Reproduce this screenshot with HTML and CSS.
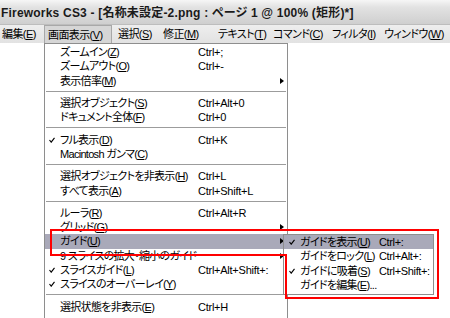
FILE: index.html
```html
<!DOCTYPE html>
<html lang="ja">
<head>
<meta charset="utf-8">
<title>Fireworks CS3</title>
<link rel="stylesheet" href="styles.css">
</head>
<body>
<div class="title">Fireworks CS3 - [名称未設定-2.png : ページ 1 @ 100% (矩形)*]</div>
<div class="menubar">
  <span class="mb mb-edit">編集(<u>E</u>)</span>
  <span class="mb mb-view active">画面表示(<u>V</u>)</span>
  <span class="mb mb-sel">選択(<u>S</u>)</span>
  <span class="mb mb-mod">修正(<u>M</u>)</span>
  <span class="mb mb-text">テキスト(<u>T</u>)</span>
  <span class="mb mb-cmd">コマンド(<u>C</u>)</span>
  <span class="mb mb-fil">フィルタ(<u>I</u>)</span>
  <span class="mb mb-win">ウィンドウ(<u>W</u>)</span>
</div>
<div class="stage">
  <div class="menu">
    <div class="item"><span class="chk"></span><span class="lbl">ズームイン(<u>Z</u>)</span><span class="key">Ctrl+;</span></div>
    <div class="item"><span class="chk"></span><span class="lbl">ズームアウト(<u>O</u>)</span><span class="key">Ctrl+-</span></div>
    <div class="item"><span class="chk"></span><span class="lbl">表示倍率(<u>M</u>)</span><span class="arrow"></span></div>
    <div class="sep"></div>
    <div class="item"><span class="chk"></span><span class="lbl">選択オブジェクト(<u>S</u>)</span><span class="key">Ctrl+Alt+0</span></div>
    <div class="item"><span class="chk"></span><span class="lbl">ドキュメント全体(<u>F</u>)</span><span class="key">Ctrl+0</span></div>
    <div class="sep"></div>
    <div class="item"><span class="chk"><svg viewBox="0 0 6 6" width="6" height="6"><polyline points="0.5,3 2.2,5.2 5.5,0.8" fill="none" stroke="#000" stroke-width="1.1"/></svg></span><span class="lbl">フル表示(<u>D</u>)</span><span class="key">Ctrl+K</span></div>
    <div class="item"><span class="chk"></span><span class="lbl">Macintosh ガンマ(<u>C</u>)</span></div>
    <div class="sep"></div>
    <div class="item"><span class="chk"></span><span class="lbl">選択オブジェクトを非表示(<u>H</u>)</span><span class="key">Ctrl+L</span></div>
    <div class="item"><span class="chk"></span><span class="lbl">すべて表示(<u>A</u>)</span><span class="key">Ctrl+Shift+L</span></div>
    <div class="sep"></div>
    <div class="item"><span class="chk"></span><span class="lbl">ルーラ(<u>R</u>)</span><span class="key">Ctrl+Alt+R</span></div>
    <div class="item"><span class="chk"></span><span class="lbl">グリッド(<u>G</u>)</span><span class="arrow"></span></div>
    <div class="item hl"><span class="chk"></span><span class="lbl">ガイド(<u>U</u>)</span><span class="arrow"></span></div>
    <div class="item"><span class="chk"></span><span class="lbl">9 スライスの拡大・縮小のガイド</span><span class="arrow"></span></div>
    <div class="item"><span class="chk"><svg viewBox="0 0 6 6" width="6" height="6"><polyline points="0.5,3 2.2,5.2 5.5,0.8" fill="none" stroke="#000" stroke-width="1.1"/></svg></span><span class="lbl">スライスガイド(<u>L</u>)</span><span class="key">Ctrl+Alt+Shift+:</span></div>
    <div class="item"><span class="chk"><svg viewBox="0 0 6 6" width="6" height="6"><polyline points="0.5,3 2.2,5.2 5.5,0.8" fill="none" stroke="#000" stroke-width="1.1"/></svg></span><span class="lbl">スライスのオーバーレイ(<u>Y</u>)</span></div>
    <div class="sep"></div>
    <div class="item"><span class="chk"></span><span class="lbl">選択状態を非表示(<u>E</u>)</span><span class="key">Ctrl+H</span></div>
  </div>
  <div class="submenu">
    <div class="item hl"><span class="chk"><svg viewBox="0 0 6 6" width="6" height="6"><polyline points="0.5,3 2.2,5.2 5.5,0.8" fill="none" stroke="#000" stroke-width="1.1"/></svg></span><span class="lbl">ガイドを表示(<u>U</u>)</span><span class="key">Ctrl+:</span></div>
    <div class="item"><span class="chk"></span><span class="lbl">ガイドをロック(<u>L</u>)</span><span class="key">Ctrl+Alt+:</span></div>
    <div class="item"><span class="chk"><svg viewBox="0 0 6 6" width="6" height="6"><polyline points="0.5,3 2.2,5.2 5.5,0.8" fill="none" stroke="#000" stroke-width="1.1"/></svg></span><span class="lbl">ガイドに吸着(<u>S</u>)</span><span class="key">Ctrl+Shift+:</span></div>
    <div class="item"><span class="chk"></span><span class="lbl">ガイドを編集(<u>E</u>)...</span></div>
  </div>
  <svg class="mark" width="450" height="275" viewBox="0 0 450 275">
    <polygon points="51,187 438,187 438,255 286,255 286,212 51,212" fill="none" stroke="#ff0000" stroke-width="2"/>
  </svg>
</div>
</body>
</html>
```

FILE: styles.css
```css
* { box-sizing: border-box; }
html, body { margin: 0; padding: 0; }
body {
  width: 450px;
  height: 318px;
  overflow: hidden;
  background: #ffffff;
  font-family: "Liberation Sans", "Noto Sans CJK JP", sans-serif;
  font-size: 11px;
  color: #000;
  font-feature-settings: "palt";
}
u { text-decoration: underline; text-underline-offset: 1px; }

.title {
  height: 25px;
  padding: 5px 0 0 1px;
  line-height: 16px;
  font-weight: bold;
  font-size: 12px;
  letter-spacing: 0.2px;
  white-space: nowrap;
  color: #1a1a1a;
  background: linear-gradient(#f6f6f6 0%, #e2e2e2 30%, #cfcfcf 100%);
  border-bottom: 1px solid #bdbdbd;
}

.menubar {
  height: 18px;
  display: flex;
  align-items: stretch;
  background: linear-gradient(#eeeeee, #e2e2e2);
  white-space: nowrap;
}
.mb {
  display: flex;
  align-items: center;
  padding: 0 4px 0 4px;
  line-height: 14px;
  letter-spacing: -0.6px;
}
.mb-edit { width: 44px; padding-left: 2px; }
.mb-view { width: 68px; }
.mb-sel { width: 46px; padding-left: 6px; }
.mb-mod { width: 53px; padding-left: 5px; }
.mb-text { width: 55px; padding-left: 7px; }
.mb-cmd { width: 60px; padding-left: 7px; }
.mb-fil { width: 52px; padding-left: 6px; }
.mb-win { width: 67px; padding-left: 6px; }
.mb.active {
  background: #d6d6d6;
  border: 1px solid #a8a8a8;
  border-bottom: none;
  padding-left: 3px;
}

.stage {
  position: relative;
  height: 275px;
}

.menu {
  margin-left: 44px;
  width: 244px;
  height: 290px;
  background: #ffffff;
  border: 1px solid #8e8e8e;
  padding-top: 1px;
}
.item {
  display: flex;
  align-items: center;
  height: 14.3px;
  padding-left: 3px;
  white-space: nowrap;
  line-height: 14px;
}
.item.hl { background: #a9a9b9; }
.chk {
  width: 12px;
  flex: none;
  display: flex;
  align-items: center;
  padding-left: 1px;
}
.chk svg { display: block; }
.lbl { letter-spacing: -0.7px; }
.menu .lbl { width: 138px; flex: none; }
.key { flex: none; letter-spacing: -0.25px; }
.arrow {
  margin-left: auto;
  margin-right: 3px;
  width: 0;
  height: 0;
  border-top: 3.5px solid transparent;
  border-bottom: 3.5px solid transparent;
  border-left: 4px solid #000;
}
.sep {
  height: 1px;
  margin: 3px 1px 4px 1px;
  background: #9c9c9c;
}

.submenu {
  position: absolute;
  left: 283px;
  top: 191px;
  width: 151px;
  background: #ffffff;
  border: 1px solid #8e8e8e;
  padding-bottom: 2px;
}
.submenu .item { padding-left: 4px; }
.submenu .lbl { width: 79px; flex: none; }
.submenu .key { letter-spacing: -0.35px; }

.mark {
  position: absolute;
  left: 0;
  top: 0;
  pointer-events: none;
}
```
